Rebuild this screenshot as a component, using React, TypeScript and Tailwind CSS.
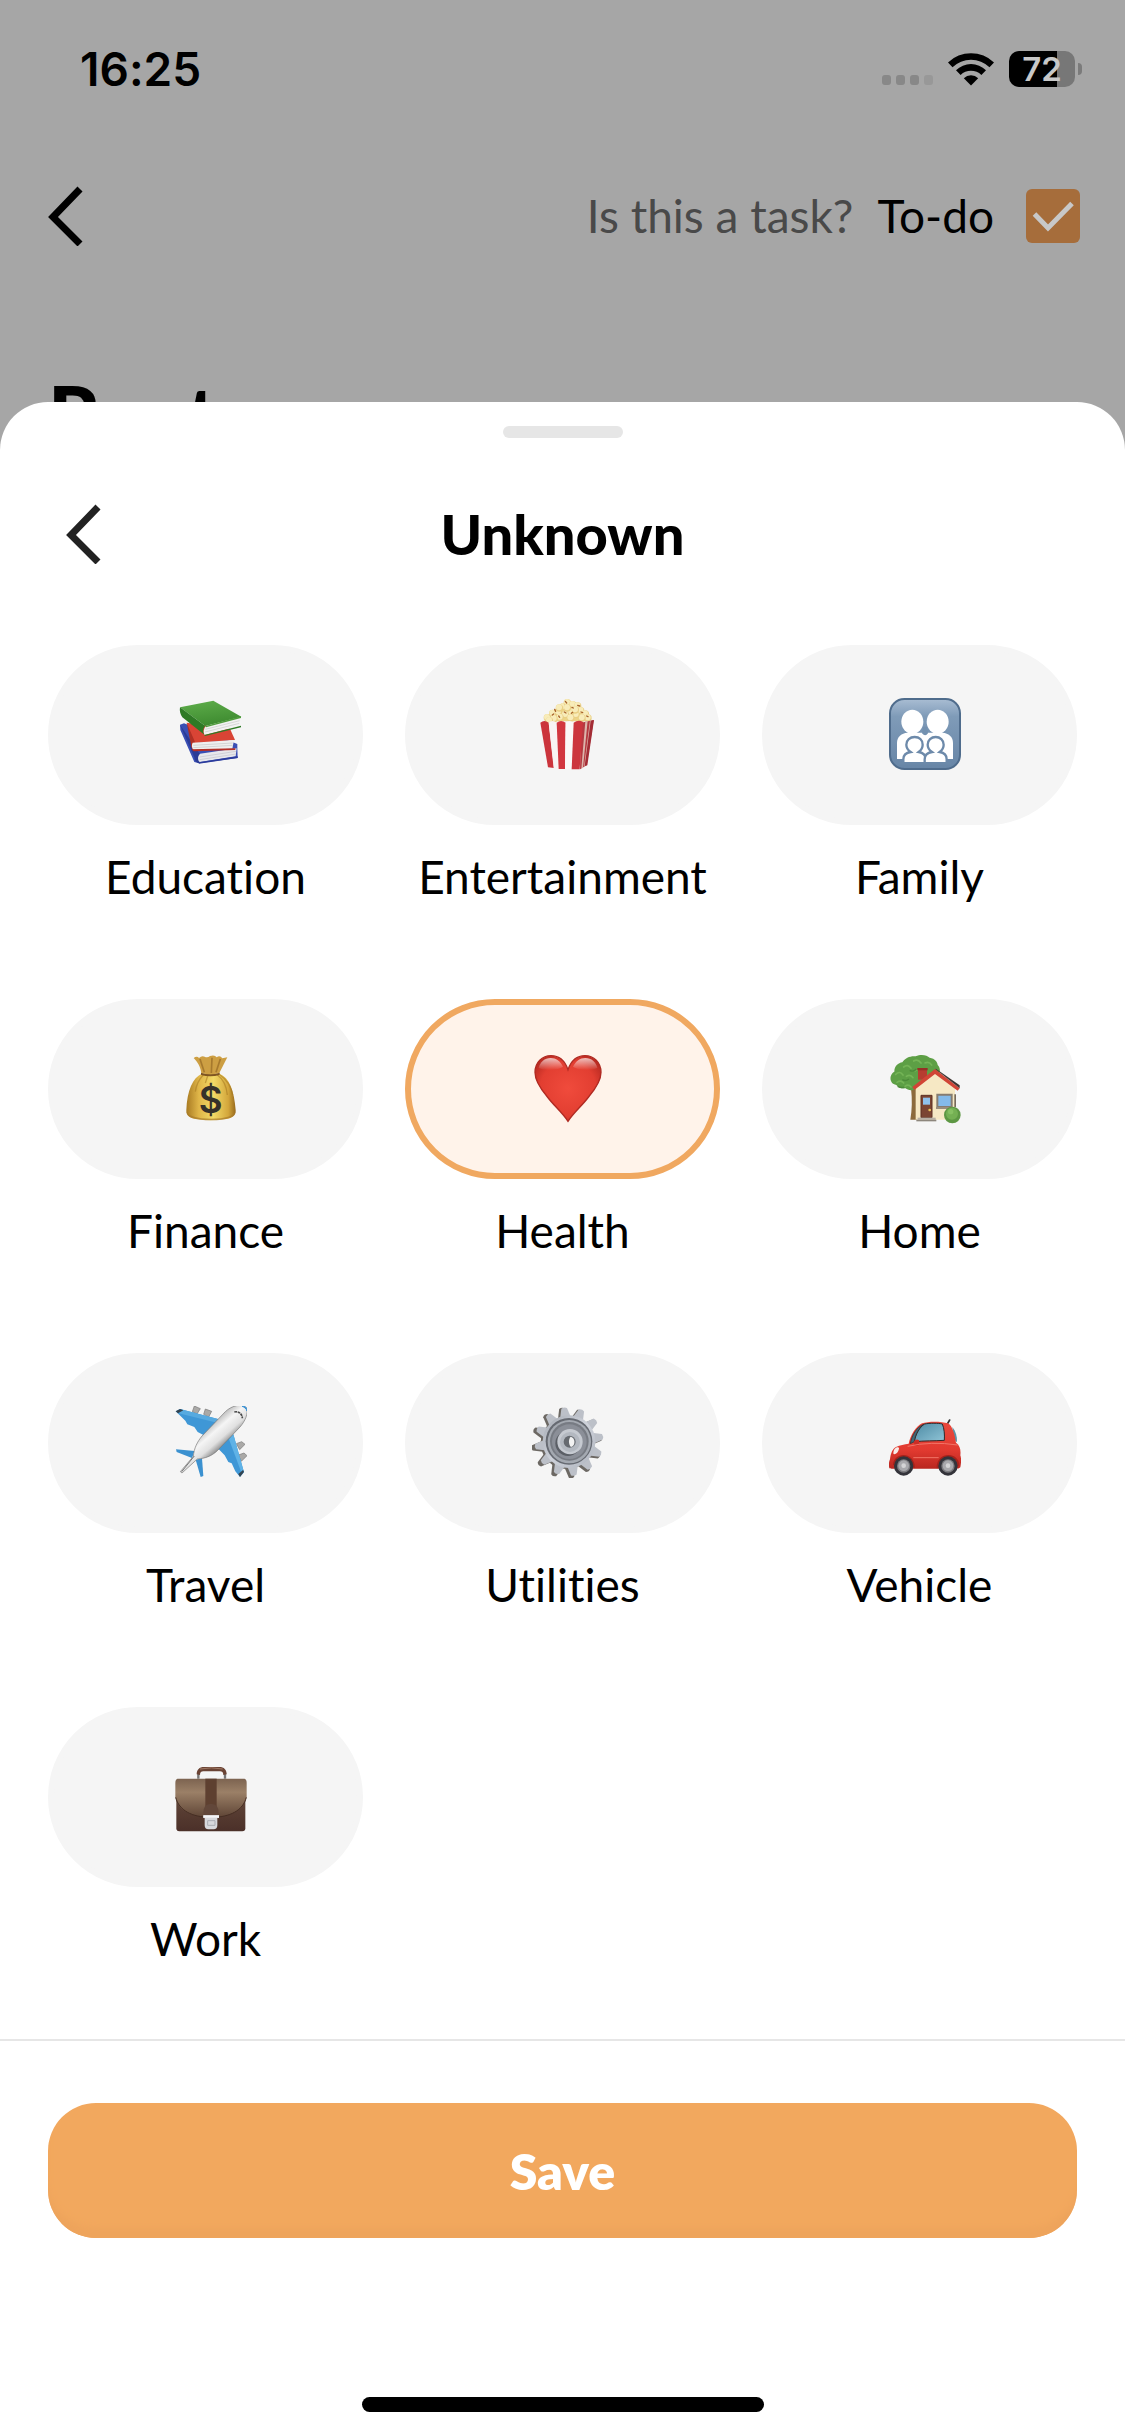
import { useState } from "react";
import type { ReactNode } from "react";
import { clsx } from "clsx";

interface Category {
  name: string;
  icon: ReactNode;
}

function BooksIcon() {
  return (
    <svg viewBox="75 54 216 216" className="size-[72px]" aria-hidden="true">
      <defs>
        <linearGradient id="bookGreen" x1="0" y1="0" x2="0.3" y2="1">
          <stop offset="0" stopColor="#5fae4b" />
          <stop offset="1" stopColor="#3f8c31" />
        </linearGradient>
      </defs>
      <path d="M90 134l12-4 160 62v12l1 30-116 16-14-4-42-96z" fill="#3a4fb4" />
      <path d="M90 134l43 98c0 10 6 16 14 18l4-26z" fill="#2b3b96" />
      <path d="M150 221l110-16-3 24-108 17c-7-7-6-18 1-25z" fill="#e8e8ec" />
      <path d="M149 231l109-17M149 239l109-17" stroke="#c4c4cc" strokeWidth="2" />
      <path d="M146 247l117-18v5l-116 17z" fill="#2c3c9c" />
      <path d="M110 128l130 18 15 34-124 10z" fill="#d94435" />
      <path d="M110 128l13 66c0 10 5 15 10 16l1-26z" fill="#b03025" />
      <path d="M128 188l124-8-5 26-116 4c-6-6-7-16-3-22z" fill="#efefef" />
      <path d="M130 196l118-7M130 203l118-7" stroke="#c6c6c6" strokeWidth="2" />
      <path d="M124 208l132-3v5l-125 4z" fill="#b52e25" />
      <path d="M90 82l100-20 84 48-108 28z" fill="url(#bookGreen)" />
      <path d="M90 82l76 56c-8 6-8 20-1 28L97 112c-6-9-9-19-7-30z" fill="#2e7a25" />
      <path d="M168 138l103-25-3 25-104 27c-5-8-3-20 4-27z" fill="#f2f2f2" />
      <path d="M166 148l103-26M165 156l103-26" stroke="#c9c9c9" strokeWidth="2" />
      <path d="M163 165l110-28v5l-108 26z" fill="#2e7a25" />
      <path d="M166 138l107-29v5l-105 28z" fill="#4f9c3d" />
    </svg>
  );
}

const kernels = [
  [112, 113], [128, 100], [145, 96], [160, 80], [172, 68], [188, 74], [203, 78], [212, 92],
  [226, 102], [234, 114], [216, 114], [198, 104], [182, 96], [166, 104], [150, 112], [132, 116],
  [182, 114], [148, 84], [196, 90], [118, 122], [172, 84],
];

function PopcornIcon() {
  return (
    <svg viewBox="66 54 216 216" className="size-[72px]" aria-hidden="true">
      <path d="M104 124l20-28 46-34 44 18 30 44z" fill="#ecd487" />
      {kernels.map(([x, y]) => (
        <g key={`${x}-${y}`}>
          <circle cx={x} cy={y} r="11" fill="#e9cf84" />
          <circle cx={x - 1} cy={y - 2} r="9" fill="#f8ecb9" />
        </g>
      ))}
      <path
        d="M134 88l3 6M166 64l4 5M163 96l5 3M184 100l4-3M203 76l6 2M213 96l5 2M127 105l4-3M186 82l4 2M146 108l3 4M230 108l4 2"
        stroke="#a8642b"
        strokeWidth="4"
        strokeLinecap="round"
      />
      <path d="M213 128l38-8-21 136-20 12z" fill="#b53940" />
      <path d="M226 124l7-2-14 141-5 3zM240 121l6-1-20 137-4 3z" fill="#dcb4ab" />
      <path d="M252 120l-10 2-18 136 8-2z" fill="#a32c35" />
      <path d="M91 128q12-10 25 0l16 136-18-2z" fill="#cb343c" />
      <path d="M116 128q12-10 24 0l8 139-17-3z" fill="#f8f3f3" />
      <path d="M140 128q13-10 27 0l-2 139h-19z" fill="#d2363f" />
      <path d="M167 128q12-10 24 0l-6 140-20-1z" fill="#fbf7f7" />
      <path d="M191 128q14-10 28-2l-10 142h-24z" fill="#cc353d" />
    </svg>
  );
}

function FamilyIcon() {
  return (
    <svg viewBox="72 53 216 216" className="size-[72px]" aria-hidden="true">
      <defs>
        <linearGradient id="familyBg" x1="0" y1="0" x2="0" y2="1">
          <stop offset="0" stopColor="#a9bdd3" />
          <stop offset="0.25" stopColor="#7f9bb8" />
          <stop offset="1" stopColor="#6785a6" />
        </linearGradient>
      </defs>
      <rect x="75" y="56" width="210" height="210" rx="43" fill="url(#familyBg)" stroke="#4f6c8c" strokeWidth="6" />
      <g fill="#fff">
        <ellipse cx="142" cy="124" rx="33" ry="36" />
        <ellipse cx="218" cy="124" rx="33" ry="36" />
        <path d="M96 236v-48c0-20 14-29 31-31h106c17 2 31 11 31 31v48z" />
      </g>
      <path d="M171 159q10 12 18 0l-3-20h-11z" fill="#7391b0" />
      <g fill="#fff" stroke="#6d8aaa" strokeWidth="7">
        <path d="M115 249v-12c0-13 9-20 22-22-10-7-13-15-13-22 0-14 11-23 25-23s24 9 24 23c0 7-3 15-12 22 13 2 21 9 21 22v12z" />
        <path d="M179 249v-12c0-13 9-20 22-22-10-7-13-15-13-22 0-14 11-23 24-23s24 9 24 23c0 7-3 15-12 22 13 2 21 9 21 22v12z" />
      </g>
      <path d="M100 245h160v8H100z" fill="#6b89a9" />
    </svg>
  );
}

function MoneyBagIcon() {
  return (
    <svg viewBox="75 51 216 216" className="size-[72px]" aria-hidden="true">
      <defs>
        <linearGradient id="bagBody" x1="0" y1="0" x2="1" y2="0">
          <stop offset="0" stopColor="#a87a22" />
          <stop offset="0.25" stopColor="#dfb548" />
          <stop offset="0.55" stopColor="#f2d966" />
          <stop offset="0.85" stopColor="#d3a63b" />
          <stop offset="1" stopColor="#97691c" />
        </linearGradient>
      </defs>
      <path d="M155 116h54c28 12 44 50 48 110 2 18-14 25-34 27-28 4-54 4-80 0-20-2-36-9-34-27 2-60 20-98 46-110z" fill="url(#bagBody)" />
      <path d="M110 230q8 20 74 21 64-1 72-21-1 24-72 26-74-1-74-26z" fill="#a6792b" opacity=".7" />
      <path d="M160 120q-20 20-24 50M202 120q26 18 30 60M210 120q30 20 38 60M174 120l-8 24" stroke="#a67821" strokeWidth="4" opacity=".55" fill="none" />
      <path d="M131 69q10-8 16 0 8-8 17-4 8 5 16-2 14-5 20 4 10-7 17 3l15-3-24 47q-26 8-54 0c-2-18-12-34-23-45z" fill="#cd9f43" />
      <path d="M150 72l13 40M186 68l-2 46M211 72l-13 40" stroke="#8d6120" strokeWidth="5" opacity=".6" />
      <path d="M153 113q28 9 56 0v7q-28 8-56 0z" fill="#805622" />
      <text x="182" y="233" textAnchor="middle" className="fill-[#36312a] font-['Inter',sans-serif] text-[110px] font-semibold">
        $
      </text>
    </svg>
  );
}

function HeartIcon() {
  return (
    <svg viewBox="396 186 216 216" className="size-[72px]" aria-hidden="true">
      <defs>
        <radialGradient id="heartFill" cx="0.5" cy="0.5" r="0.6">
          <stop offset="0" stopColor="#f04b3c" />
          <stop offset="0.7" stopColor="#e23e31" />
          <stop offset="1" stopColor="#b82a22" />
        </radialGradient>
        <linearGradient id="heartShine" x1="0" y1="0" x2="0" y2="1">
          <stop offset="0" stopColor="#fff" stopOpacity=".7" />
          <stop offset="1" stopColor="#fff" stopOpacity="0" />
        </linearGradient>
      </defs>
      <path
        d="M504 394c-18-28-42-46-64-76-22-26-35-49-35-71 0-30 22-50 48-50 24 0 42 16 51 42 9-26 27-42 51-42 26 0 48 20 48 50 0 22-13 45-35 71-22 30-46 48-64 76z"
        fill="url(#heartFill)"
        stroke="#b02a22"
        strokeWidth="4"
      />
      <path d="M416 234c4-18 18-30 36-30 16 0 29 9 37 26-14 10-54 14-73 4z" fill="url(#heartShine)" />
      <path d="M592 234c-4-18-18-30-36-30-16 0-29 9-37 26 14 10 54 14 73 4z" fill="url(#heartShine)" />
    </svg>
  );
}

function HouseIcon() {
  return (
    <svg viewBox="72 51 216 216" className="size-[72px]" aria-hidden="true">
      <path d="M138 160h18v94h-20c5-28 6-60 2-94z" fill="#8c6a3c" />
      <path d="M78 138c-5-14 3-24 10-28 0-18 12-26 24-28 8-14 26-20 40-18 16-8 34-4 42 4 16 2 24 14 24 22 10 10 8 24 0 32l-64 40c-14 6-26 4-32-2-14 2-24-4-28-10-10-2-14-6-16-12z" fill="#5d9f45" />
      <path
        d="M92 118q12-12 22 2M116 96q12-10 22 4M146 78q12-8 22 6M180 84q12-6 20 6M96 142q12-8 20 2M124 124q12-8 20 4M120 154q10-8 18 2M150 108q6-6 14 0"
        fill="none"
        stroke="#74b456"
        strokeWidth="5"
        strokeLinecap="round"
      />
      <path d="M98 154q12 6 20 2M112 134q10 6 20-2M134 106q12 6 20-4" fill="none" stroke="#4b8a39" strokeWidth="4" />
      <path d="M159 100h27v34h-27z" fill="#b63d30" />
      <path d="M157 99h31v7h-31z" fill="#963025" />
      <path d="M152 158l58-46 60 48v94H152z" fill="#f6e8c4" />
      <path d="M268 178h5v38h-5z" fill="#766a5c" />
      <path d="M142 156l68-54 74 58-6 7-68-50-62 48z" fill="#d14536" />
      <path d="M210 101l74 59v-9l-70-49z" fill="#3e3431" />
      <path d="M168 181h33v67h-33z" fill="#7b4532" stroke="#5c3022" strokeWidth="3" />
      <path d="M174 188h21v21h-21z" fill="#8fc2ec" />
      <circle cx="194" cy="225" r="4" fill="#eac45a" />
      <path d="M217 179h43v37h-43z" fill="#84bae9" stroke="#867c70" strokeWidth="6" />
      <path d="M213 216h51v6h-51z" fill="#9a8d7c" />
      <path d="M158 248h54v6h-54z" fill="#b7b0a5" />
      <path d="M154 254h60v5h-60z" fill="#8d867c" />
      <circle cx="262" cy="240" r="25" fill="#5d9743" />
      <circle cx="261" cy="236" r="18" fill="#74b053" />
      <circle cx="257" cy="230" r="8" fill="#86c062" />
    </svg>
  );
}

function PlaneIcon() {
  return (
    <svg viewBox="75 63 216 216" className="size-[72px]" aria-hidden="true">
      <defs>
        <linearGradient id="planeBody" x1="0.3" y1="0.3" x2="0.6" y2="0.65">
          <stop offset="0" stopColor="#9a9a9a" />
          <stop offset="0.45" stopColor="#f5f5f5" />
          <stop offset="0.75" stopColor="#e0e0e0" />
          <stop offset="1" stopColor="#8a8a8a" />
        </linearGradient>
      </defs>
      <g fill="#aaa9a7" stroke="#777" strokeWidth="2">
        <path d="M133 63l18 8-10 16-14-7z" />
        <path d="M166 72l19 7-9 17-15-8z" />
        <path d="M259 176l16-6 10 8-16 16z" />
        <path d="M265 210l17-6 9 8-17 17z" />
      </g>
      <path d="M77 79l13-7 128 34-52 47-23-12-10-15-21-8-6-11z" fill="#3f97d6" />
      <path d="M90 72l128 34-11 9-124-31z" fill="#57aae0" />
      <path d="M77 79l13-7 10 4-16 9z" fill="#33434f" />
      <path d="M250 148l32 114-12 14-14-17-11-24-10-4-11-20-22-23z" fill="#3f97d6" />
      <path d="M250 148l32 114-7 3-38-102z" fill="#5fb2e6" />
      <path d="M282 260l-12 16-5-9 14-12z" fill="#33434f" />
      <path d="M78 193l56 5-8 21-46-18z" fill="#3b91d0" />
      <path d="M137 224l19-4 4 53-8 3z" fill="#3b91d0" />
      <path
        d="M290 69c5 16-4 39-20 57l-68 71c-18 17-36 23-60 25l-46 42-5-4 39-46c2-24 12-44 26-61l70-73c18-18 54-28 64-11z"
        fill="url(#planeBody)"
        stroke="#777"
        strokeWidth="2"
      />
      <path d="M276 64c8-2 15 3 15 14-2-7-8-12-15-14z" fill="#3c94d6" stroke="#3c94d6" strokeWidth="3" />
      <path d="M253 81c12-3 24 5 24 19" fill="none" stroke="#4b4b4b" strokeWidth="5" strokeDasharray="8 2" />
      <path d="M133 213l-38 47" stroke="#777" strokeWidth="3" />
    </svg>
  );
}

const teeth = [0, 30, 60, 90, 120, 150, 180, 210, 240, 270, 300, 330];

function GearIcon() {
  return (
    <svg viewBox="0 0 216 216" className="size-[72px]" aria-hidden="true">
      <defs>
        <linearGradient id="gearFace" x1="0" y1="0" x2="1" y2="1">
          <stop offset="0" stopColor="#a5aab3" />
          <stop offset="0.5" stopColor="#ced2da" />
          <stop offset="1" stopColor="#aeb3bd" />
        </linearGradient>
      </defs>
      <g fill="#6c6863">
        <circle cx="104" cy="111" r="78" />
        {teeth.map((angle) => (
          <path key={angle} d="M88 37l8-30q8-6 16 0l8 30z" transform={`rotate(${angle - 8} 104 111)`} />
        ))}
      </g>
      <g fill="url(#gearFace)">
        {teeth.map((angle) => (
          <path key={angle} d="M94 36l8-30q9-5 17 0l8 30z" fill="#bcc0c8" transform={`rotate(${angle - 8} 111 107)`} />
        ))}
        <circle cx="111" cy="107" r="79" />
      </g>
      <circle cx="111" cy="106" r="70" fill="#666a72" />
      <circle cx="112" cy="107" r="65" fill="#a4a9b1" />
      <circle cx="112" cy="106" r="58" fill="#777b83" />
      <circle cx="112" cy="107" r="52" fill="#8b8f98" />
      <circle cx="108" cy="112" r="38" fill="#5b5f66" />
      <circle cx="114" cy="107" r="38" fill="#c6cad1" />
      <circle cx="114" cy="108" r="30" fill="#b3b8c0" />
      <circle cx="113" cy="107" r="18" fill="#666a70" />
      <path d="M116 92c14 3 16 26 1 31-8-8-8-24-1-31z" fill="#f2f2f2" />
    </svg>
  );
}

function CarIcon() {
  return (
    <svg viewBox="72 63 216 216" className="size-[72px]" aria-hidden="true">
      <defs>
        <linearGradient id="carBody" x1="0" y1="0" x2="0" y2="1">
          <stop offset="0" stopColor="#e9493d" />
          <stop offset="0.6" stopColor="#e23a30" />
          <stop offset="1" stopColor="#b9261f" />
        </linearGradient>
        <linearGradient id="carGlass" x1="0" y1="0" x2="1" y2="1">
          <stop offset="0" stopColor="#4c8aa4" />
          <stop offset="1" stopColor="#90c4d6" />
        </linearGradient>
      </defs>
      <path d="M247 117l7-12" stroke="#333" strokeWidth="5" strokeLinecap="round" />
      <path d="M262 126c10 12 15 28 14 46l-10-10z" fill="#5b93a8" />
      <path
        d="M73 249c-2-8-2-18 2-26 2-18 8-32 18-37 12-6 25-8 38-10 6-26 20-50 40-61 16-6 56-7 78 0 14 8 20 34 24 58 12 8 15 22 13 38 3 8 3 20 0 36-4 4-8 4-14 4H84c-6 0-9 0-11-2z"
        fill="url(#carBody)"
      />
      <path d="M148 170c4-24 16-44 31-53 14-3 42-3 53 0 6 14 7 32 6 49-30 2-60 1-90 4z" fill="url(#carGlass)" stroke="#2f2a2a" strokeWidth="3" />
      <path d="M136 176l12-6c3-22 13-40 28-52-22 8-36 34-40 58z" fill="#426878" stroke="#2f2a2a" strokeWidth="2" />
      <path d="M147 168q8-8 15-2v14q-6 5-14 1z" fill="#cc2d25" />
      <path d="M96 187q7-2 6 4c-2 10-8 16-14 17-4 0-3-6-2-10 2-6 6-10 10-11z" fill="#f8ece8" />
      <path d="M145 218h76M128 184q70-16 150-4" stroke="#f27467" strokeWidth="3" fill="none" />
      <path d="M84 240c2-40 64-42 66 8zM215 250c-2-52 68-52 68-8z" fill="#a5221b" />
      {[116, 249].map((x) => (
        <g key={x}>
          <circle cx={x} cy="243" r="29" fill="#33333a" />
          <circle cx={x} cy="243" r="20" fill="#7c7c80" />
          <circle cx={x} cy="242" r="16" fill="#a9a9ad" />
          <circle cx={x} cy="242" r="7" fill="#d4d4d6" />
        </g>
      ))}
    </svg>
  );
}

function BriefcaseIcon() {
  return (
    <svg viewBox="0 0 216 216" className="size-[72px]" aria-hidden="true">
      <defs>
        <linearGradient id="caseFlap" x1="0" y1="0" x2="0" y2="1">
          <stop offset="0" stopColor="#7c6350" />
          <stop offset="0.35" stopColor="#9b8067" />
          <stop offset="1" stopColor="#5f4536" />
        </linearGradient>
        <linearGradient id="caseBody" x1="0" y1="0" x2="0" y2="1">
          <stop offset="0" stopColor="#6b5040" />
          <stop offset="1" stopColor="#4b3029" />
        </linearGradient>
      </defs>
      <path d="M70 56V38M150 56V38" stroke="#777" strokeWidth="7" />
      <path d="M65 43c0-14 8-22 22-22h46c14 0 22 8 22 22l-10 2c0-8-4-11-10-11H85c-6 0-10 3-10 11z" fill="#6a4334" />
      <path d="M75 27q35-7 68 0" stroke="#a07a66" strokeWidth="3" fill="none" />
      <rect x="4" y="60" width="207" height="154" rx="9" fill="url(#caseBody)" />
      <path d="M10 56h196c6 0 9 4 9 12v42c-8 40-48 62-108 62S8 150 1 110V68c0-8 3-12 9-12z" fill="url(#caseFlap)" />
      <path d="M2 112c10 39 48 60 106 60s96-21 106-60" stroke="#442c22" strokeWidth="3" fill="none" />
      <path d="M91 56h34v90H91z" fill="#5e4030" />
      <path d="M86 166c-4-28 10-34 22-34s26 6 22 34z" fill="#62473a" />
      <path d="M85 166h47v8h-5v22c0 8-4 12-11 12h-16c-7 0-11-4-11-12v-22h-4z" fill="#d7d8dc" />
      <path d="M85 166h47v7H85z" fill="#f5f5f7" />
      <path d="M98 182h22v14H98z" fill="none" stroke="#aaacb3" strokeWidth="3" />
    </svg>
  );
}

const categories: Category[] = [
  { name: "Education", icon: <BooksIcon /> },
  { name: "Entertainment", icon: <PopcornIcon /> },
  { name: "Family", icon: <FamilyIcon /> },
  { name: "Finance", icon: <MoneyBagIcon /> },
  { name: "Health", icon: <HeartIcon /> },
  { name: "Home", icon: <HouseIcon /> },
  { name: "Travel", icon: <PlaneIcon /> },
  { name: "Utilities", icon: <GearIcon /> },
  { name: "Vehicle", icon: <CarIcon /> },
  { name: "Work", icon: <BriefcaseIcon /> },
];

function BackChevron() {
  return (
    <svg viewBox="0 0 36 60" className="h-[60px] w-9" fill="none" stroke="currentColor" strokeWidth="7" aria-hidden="true">
      <path d="M32 3L5 31l27 27" />
    </svg>
  );
}

function StatusBar() {
  return (
    <div className="flex h-[138px] items-center justify-between pr-[43px] pl-20 font-['Inter',sans-serif]">
      <span className="text-[46px] leading-[54px] font-semibold">16:25</span>
      <div className="flex items-center">
        <svg viewBox="0 0 52 36" className="mr-3.5 h-9 w-[52px]" aria-hidden="true">
          <g fill="#888">
            <rect x="0" y="24" width="9" height="10" rx="3" />
            <rect x="14" y="24" width="9" height="10" rx="3" />
            <rect x="28" y="24" width="9" height="10" rx="3" />
            <rect x="42" y="24" width="9" height="10" rx="3" fill="#989898" />
          </g>
        </svg>
        <svg viewBox="0 0 46 36" className="mr-[15px] h-9 w-[46px]" aria-hidden="true">
          <path d="M0 11.500a33 33 0 0 1 46 0l-4.500 4.700a26.500 26.500 0 0 0-37 0z" />
          <path d="M8 19.200a21.500 21.500 0 0 1 30 0l-4.600 4.700a15 15 0 0 0-20.800 0z" />
          <path d="M15.800 27.200a10.400 10.400 0 0 1 14.400 0L23 34.500z" />
        </svg>
        <div className="flex h-9 w-[66px] items-center justify-center rounded-[10px] bg-linear-to-r from-black from-72% to-[#777] to-72%">
          <span className="text-[33px] leading-9 font-semibold text-[#c8c8c8]">72</span>
        </div>
        <div className="ml-[3px] h-3 w-1 rounded-r-full bg-[#7b7b7b]" />
      </div>
    </div>
  );
}

export default function App() {
  const [selected, setSelected] = useState("Health");
  const [isTask, setIsTask] = useState(true);

  return (
    <div className="flex min-h-screen flex-col bg-[#a6a6a6] font-['Lato',sans-serif] text-black [font-variant-ligatures:none]">
      {/* Dimmed page behind the sheet */}
      <div>
        <StatusBar />
        <header className="flex h-[156px] items-center justify-between pr-[45px] pl-12">
          <button type="button" aria-label="Back">
            <BackChevron />
          </button>
          <div className="flex items-center text-[46px] leading-[56px]">
            <span className="mr-6 text-[#494949]">Is this a task?</span>
            <label htmlFor="todo" className="mr-8">
              To-do
            </label>
            <span className="grid">
              <input
                id="todo"
                type="checkbox"
                checked={isTask}
                onChange={(e) => setIsTask(e.target.checked)}
                className="col-start-1 row-start-1 size-[54px] appearance-none rounded-md bg-[#a66d3b]"
              />
              {isTask && (
                <svg viewBox="0 0 54 54" className="pointer-events-none col-start-1 row-start-1 size-[54px]" fill="none" aria-hidden="true">
                  <path d="M8.500 25l13.500 14L46 14.500" stroke="#c8c8c8" strokeWidth="5" />
                </svg>
              )}
            </span>
          </div>
        </header>
        <h1 className="mt-[73px] px-12 text-[81px] leading-[96px] font-black">Rent</h1>
      </div>

      {/* Category sheet, slides over the page title */}
      <main className="relative -mt-[61px] flex grow flex-col rounded-t-[48px] bg-white pt-6">
        <div className="mx-auto h-3 w-[120px] rounded-full bg-[#e6e6e6]" />

        <div className="mt-16 grid h-16 grid-cols-[1fr_auto_1fr] items-center px-[66px]">
          <button type="button" aria-label="Back" className="justify-self-start text-[#222]">
            <BackChevron />
          </button>
          <h2 className="text-[56px] leading-[64px] font-black">Unknown</h2>
        </div>

        <div className="mt-[79px] grid grid-cols-3 gap-x-[42px] gap-y-[94px] px-12">
          {categories.map(({ name, icon }) => (
            <button
              key={name}
              type="button"
              aria-pressed={selected === name}
              onClick={() => setSelected(name)}
              className="flex flex-col items-center gap-6"
            >
              <span
                className={clsx(
                  "flex h-[180px] w-full items-center justify-center rounded-full border-6 pb-0.5 pl-2.5",
                  selected === name ? "border-[#f0a860] bg-[#fff3ea]" : "border-[#f5f5f5] bg-[#f5f5f5]"
                )}
              >
                {icon}
              </span>
              <span className="text-[46px] leading-[56px]">{name}</span>
            </button>
          ))}
        </div>

        <footer className="mt-[72px] flex grow flex-col border-t-2 border-[#e6e6e6] px-12 pt-[62px] pb-6">
          <button
            type="button"
            className="h-[135px] w-full rounded-[48px] bg-[#f2a85e] text-[50px] leading-[60px] font-extrabold text-white shadow-[inset_0_-12px_6px_-2px_#eea45c]"
          >
            Save
          </button>
          <div className="mx-auto mt-auto h-[15px] w-[402px] rounded-full bg-black" />
        </footer>
      </main>
    </div>
  );
}
